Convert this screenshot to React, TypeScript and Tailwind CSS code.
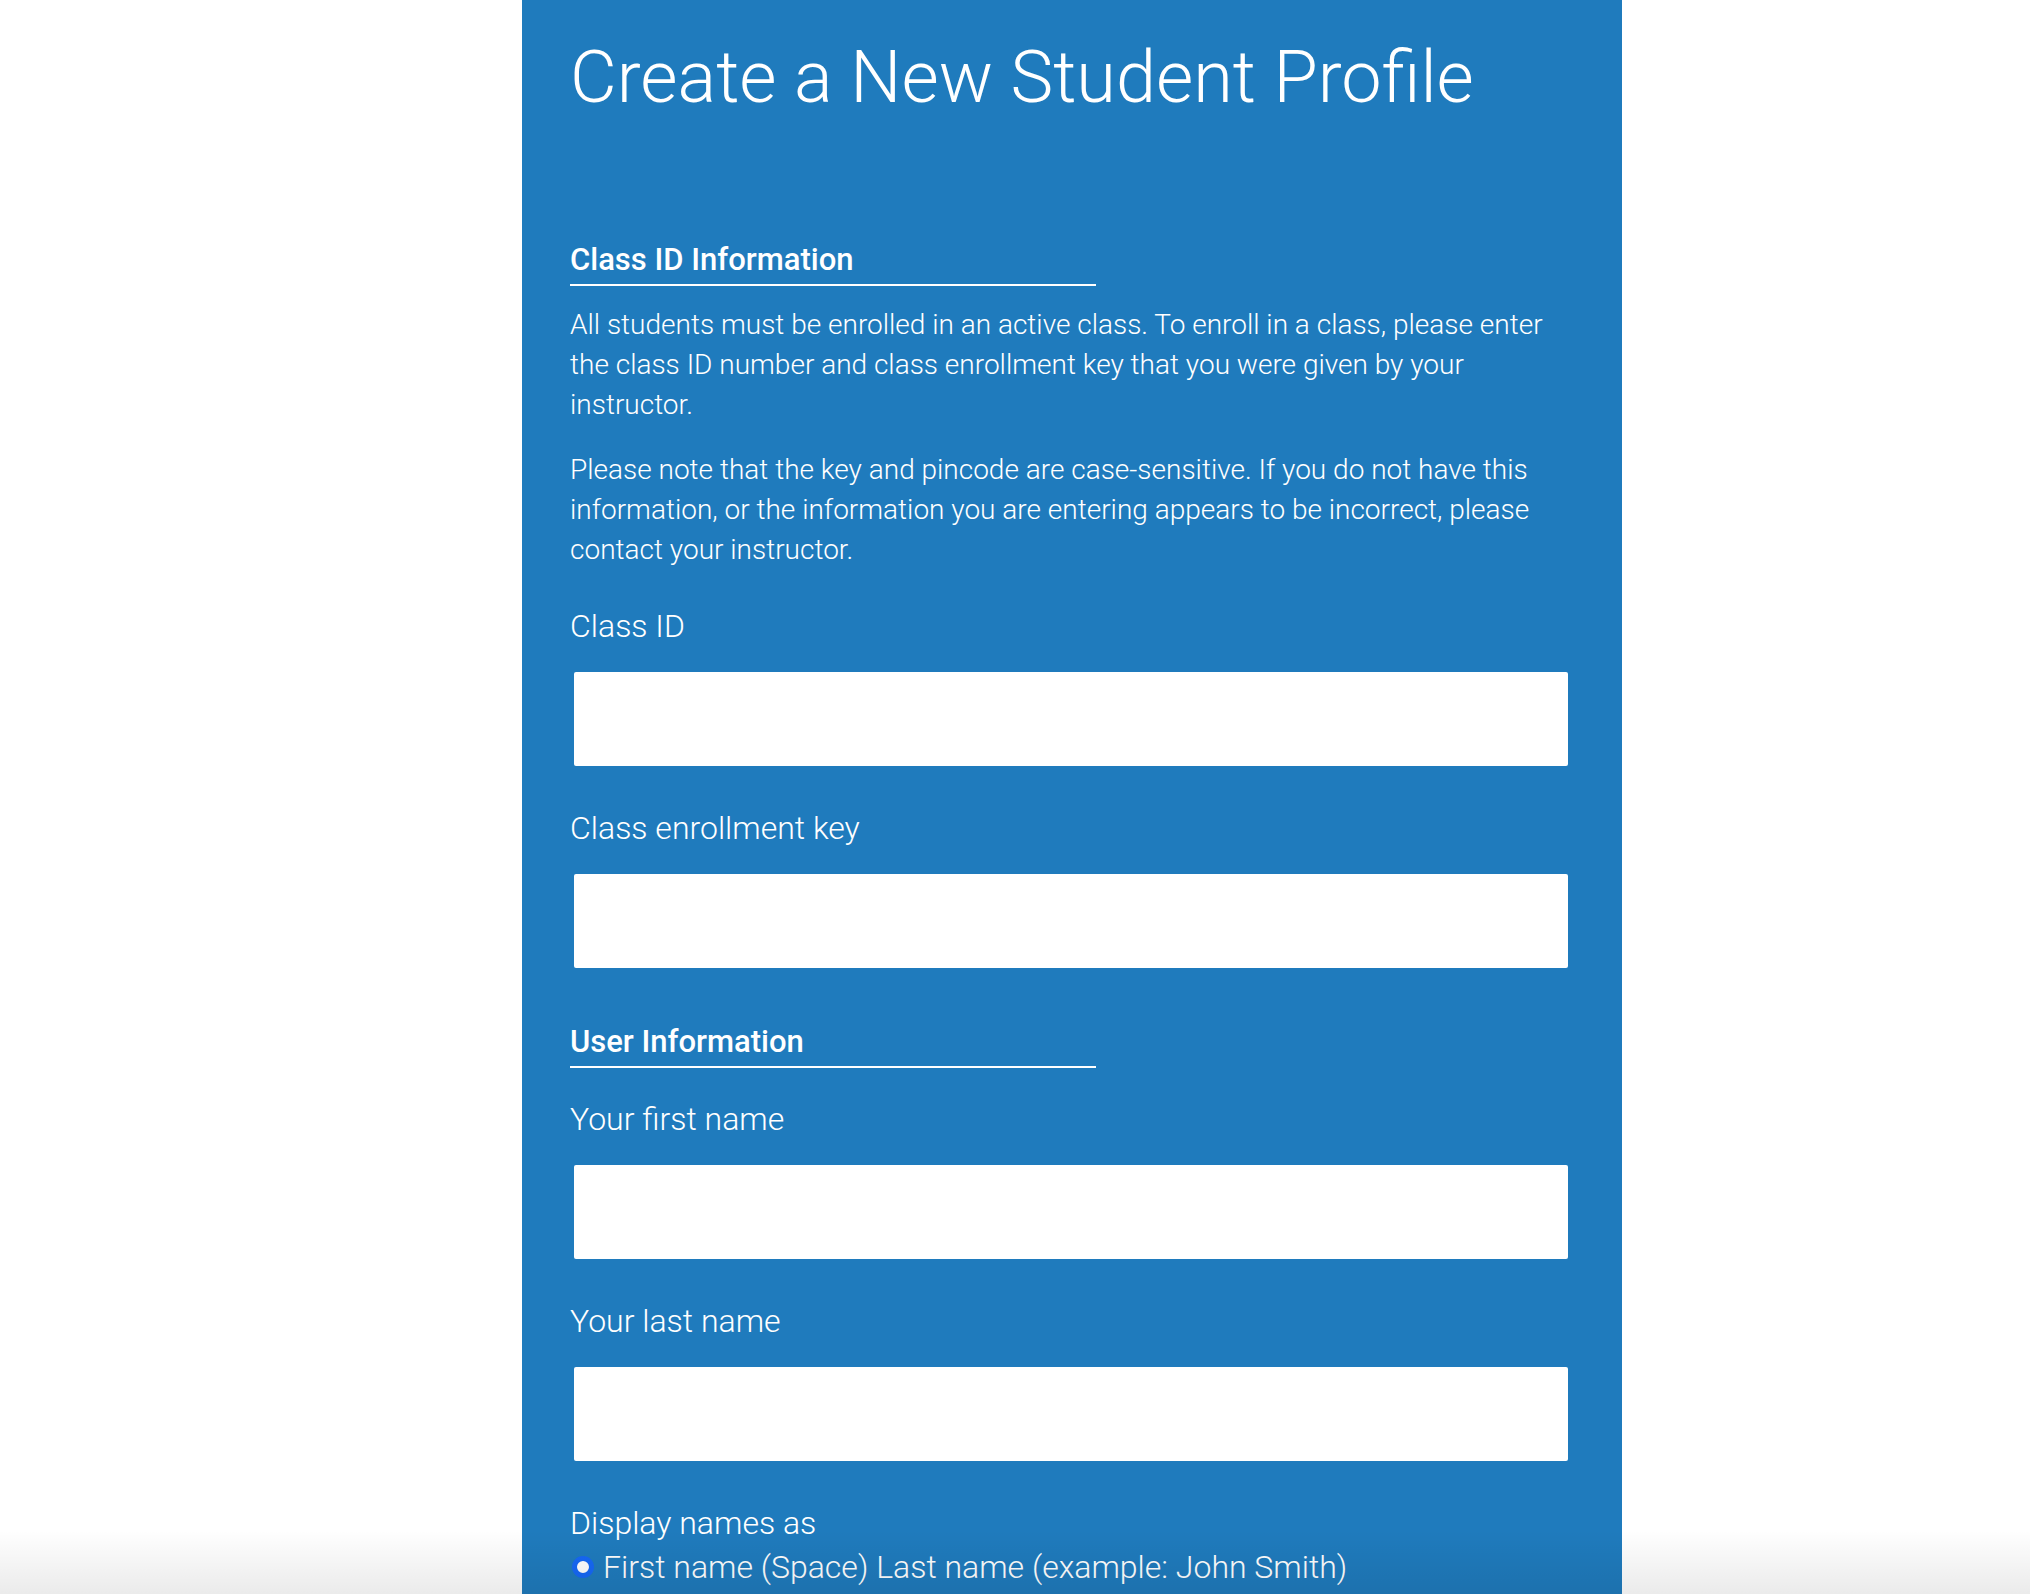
export default function App() {
  const labelClass = "block text-[32px] leading-[40px] font-light";
  const inputClass = "block ml-[4px] w-[994px] h-[94px] bg-white rounded-[2px] border-0 outline-none px-4 text-[28px] text-gray-800";
  const headingClass = "w-[526px] border-b-2 border-white pb-[6px] text-[31px] leading-[36px] font-medium";

  return (
    <div className="relative h-[1594px] overflow-hidden bg-white font-[Roboto,'Liberation_Sans',sans-serif]">
      <div className="ml-[522px] w-[1100px] min-h-full bg-[#1f7bbd] pl-[48px] pt-[38px] text-white">
        <h1 className="text-[72px] leading-[80px] font-light">Create a New Student Profile</h1>

        <form onSubmit={(e) => e.preventDefault()}>
          <h2 className={`${headingClass} mt-[124px]`}>Class ID Information</h2>
          <p className="mt-[19px] w-[1000px] text-[28px] leading-[40px] font-light">
            All students must be enrolled in an active class. To enroll in a class, please enter the class ID number and class enrollment key that you were given by your instructor.
          </p>
          <p className="mt-[25px] w-[1000px] text-[28px] leading-[40px] font-light">
            Please note that the key and pincode are case-sensitive. If you do not have this information, or the information you are entering appears to be incorrect, please contact your instructor.
          </p>

          <label htmlFor="classId" className={`${labelClass} mt-[36px]`}>Class ID</label>
          <input id="classId" className={`${inputClass} mt-[26px]`} />

          <label htmlFor="classKey" className={`${labelClass} mt-[42px]`}>Class enrollment key</label>
          <input id="classKey" className={`${inputClass} mt-[26px]`} />

          <h2 className={`${headingClass} mt-[56px]`}>User Information</h2>

          <label htmlFor="firstName" className={`${labelClass} mt-[31px]`}>Your first name</label>
          <input id="firstName" className={`${inputClass} mt-[26px]`} />

          <label htmlFor="lastName" className={`${labelClass} mt-[42px]`}>Your last name</label>
          <input id="lastName" className={`${inputClass} mt-[26px]`} />

          <div className={`${labelClass} mt-[42px]`}>Display names as</div>
          <label className="mt-[4px] flex items-center gap-[9px] text-[32px] leading-[40px] font-light">
            <input type="radio" name="displayName" className="sr-only" />
            <svg className="ml-[2px] shrink-0" width="22" height="22" viewBox="0 0 22 22">
              <circle cx="11" cy="11" r="8.5" fill="#ffffff" stroke="#1668f5" strokeWidth="5" />
            </svg>
            First name (Space) Last name (example: John Smith)
          </label>
        </form>
      </div>

      <div className="pointer-events-none absolute inset-x-0 bottom-0 h-[64px] bg-linear-to-b from-transparent to-black/[0.08]" />
    </div>
  );
}
